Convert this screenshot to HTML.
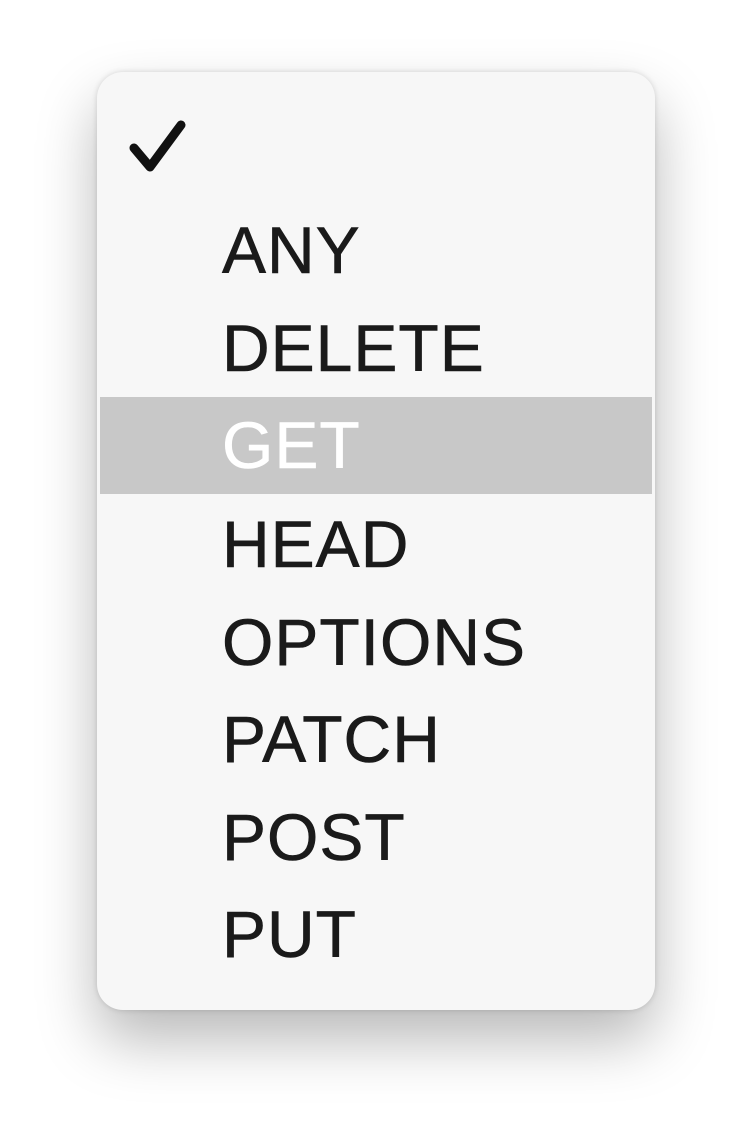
<!DOCTYPE html>
<html><head><meta charset="utf-8"><style>
html,body{margin:0;padding:0;width:750px;height:1131px;background:#fff;overflow:hidden}
.menu{position:absolute;left:97px;top:72px;width:558px;height:938px;background:#f7f7f7;border-radius:26px;box-shadow:0 30px 60px rgba(0,0,0,0.28),0 0 6px rgba(0,0,0,0.15);}
.item{position:absolute;left:0;width:558px;height:97px;font-family:"Liberation Sans",sans-serif;font-size:66px;letter-spacing:1px;color:#1a1a1a;line-height:97px;text-indent:125px;-webkit-text-stroke:0.6px #1a1a1a}
.hl{background:#c8c8c8;color:#fff;-webkit-text-stroke:0.6px #fff;left:3px;width:552px;text-indent:122px}
svg{position:absolute;left:128px;top:120px}
</style></head><body>
<div class="menu">
<div class="item" style="top:130px">ANY</div>
<div class="item" style="top:228px">DELETE</div>
<div class="item hl" style="top:325px">GET</div>
<div class="item" style="top:424px">HEAD</div>
<div class="item" style="top:522px">OPTIONS</div>
<div class="item" style="top:619px">PATCH</div>
<div class="item" style="top:717px">POST</div>
<div class="item" style="top:814px">PUT</div>
</div>
<svg width="60" height="56" viewBox="0 0 60 56"><path d="M6 28 L22 47 L53 5" fill="none" stroke="#111" stroke-width="9" stroke-linecap="round" stroke-linejoin="round"/></svg>
</body></html>
